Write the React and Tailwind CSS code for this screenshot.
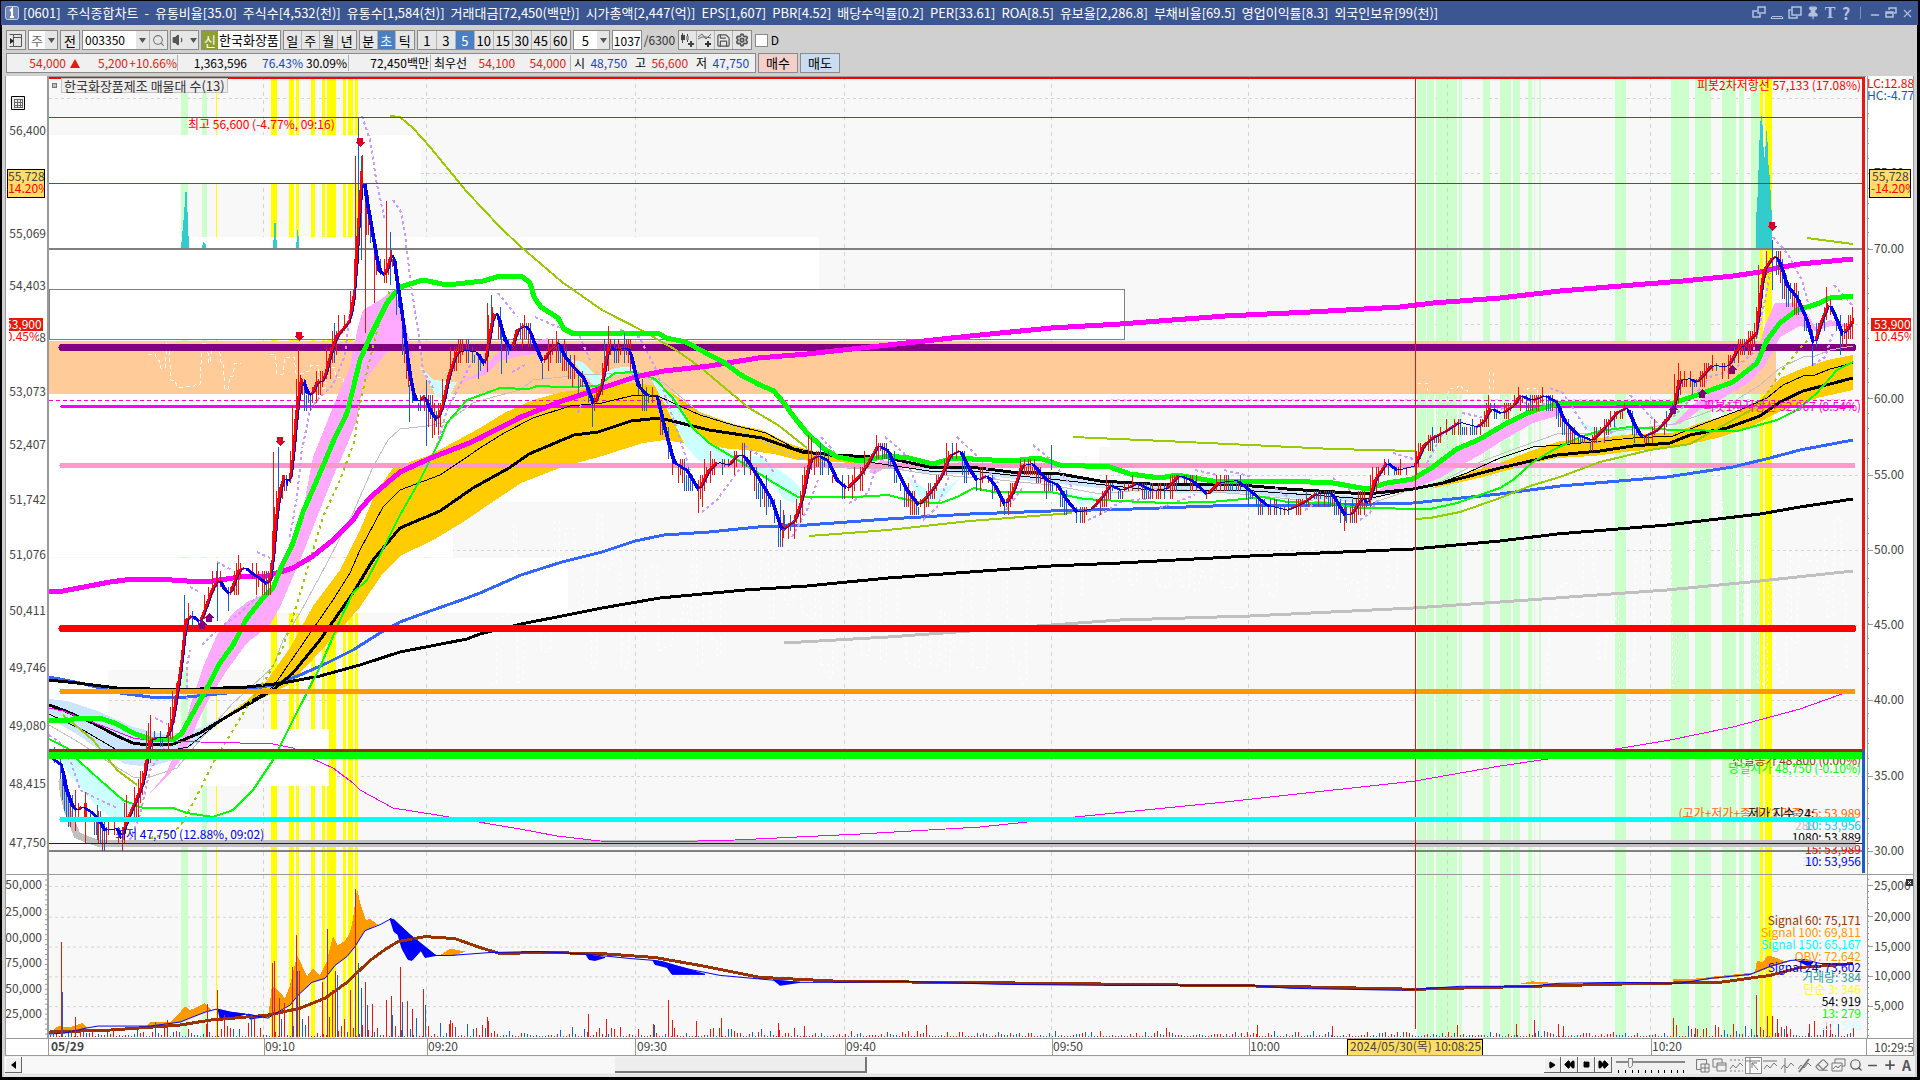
import React from "react";
import {
  Search,
  Volume1,
  Save,
  Settings,
  Pin,
  Minus,
  Plus,
  X,
  Eraser,
  Play,
  Square,
  Rewind,
  FastForward,
} from "lucide-react";

// price pane spans x 49..1866, y 76..874 ; volume pane y 874..1038
const X0 = 49;
const W = 1817;
const PRICE = { top: 76, height: 798 };
const VOLUME = { top: 874, height: 164 };

const px = (x) => `${((x - X0) / W) * 100}%`;
const py = (y, pane) => `${((y - pane.top) / pane.height) * 100}%`;

// small repeatable random so every render draws the same candles
const rnd = (n) => {
  const v = Math.sin(n * 12.9898 + 4.137) * 43758.5453;
  return v - Math.floor(v);
};

const parse = (s) => s.split(" ").map((p) => p.split(",").map(Number));

const valueAt = (pts, x) => {
  if (x <= pts[0][0]) return pts[0][1];
  for (let i = 1; i < pts.length; i++) {
    if (x <= pts[i][0]) {
      const [ax, ay] = pts[i - 1];
      const [bx, by] = pts[i];
      return ay + ((by - ay) * (x - ax)) / (bx - ax);
    }
  }
  return pts[pts.length - 1][1];
};

const greenBars = [
  [181, 7], [202, 5], [1417, 9], [1427, 7], [1436, 21], [1459, 3], [1483, 7],
  [1500, 11], [1513, 7], [1528, 4], [1534, 1], [1539, 2], [1615, 11],
  [1671, 18], [1695, 16], [1722, 14], [1739, 5], [1751, 9],
];
const yellowBars = [
  [216, 1], [271, 6], [289, 5], [296, 3], [311, 4], [322, 3], [327, 9],
  [343, 3], [348, 5], [355, 3], [1760, 3], [1765, 7],
];
const gridX = [263, 426, 635, 844, 1051, 1248, 1447, 1650];
const priceGridY = [98, 173, 249, 324, 399, 475, 550, 625, 700, 776, 851];
const volumeGridY = [885, 916, 946, 976, 1006];

// volume profile boxes: y, height, right edge
const profile = [
  [135, 48, 421], [184, 53, 180], [237, 52, 819], [394, 53, 1110],
  [447, 55, 1099], [502, 55, 453], [558, 55, 568], [613, 57, 270],
  [670, 59, 108], [729, 57, 329], [786, 57, 189],
];

const lines = {
  magenta:
    "49,592 63,591 110,582 133,579 157,579 187,581 213,581 240,577 267,576 293,568 313,556 333,540 353,520 360,509 373,495 400,472 433,457 467,444 480,438 521,417 562,401 602,388 635,377 664,371 709,366 758,358 807,354 888,345 970,336 1051,328 1120,324 1225,316 1310,312 1400,307 1433,303 1500,298 1560,291 1633,285 1683,281 1733,276 1760,272 1777,268 1800,264 1853,259",
  green:
    "49,720 67,721 77,718 100,718 117,724 133,733 150,739 173,740 182,733 193,713 207,688 220,663 233,645 247,618 263,598 273,588 280,570 293,543 303,512 320,473 333,442 347,413 354,385 360,360 370,337 387,303 400,287 423,280 447,285 483,281 500,276 523,277 530,283 534,297 541,307 558,318 564,329 574,334 623,333 660,334 666,338 686,342 704,352 725,363 741,375 758,384 774,391 784,403 794,417 807,433 823,448 837,457 860,461 888,456 909,458 933,464 953,458 1011,461 1039,458 1060,465 1110,467 1130,474 1160,478 1177,475 1213,481 1287,481 1333,483 1367,489 1387,483 1413,479 1433,467 1457,449 1480,439 1507,423 1530,412 1557,404 1617,403 1673,403 1700,394 1733,382 1757,363 1767,340 1780,323 1797,310 1817,304 1830,298 1853,296",
  black:
    "49,705 63,710 93,723 117,736 133,743 147,745 173,744 200,733 233,713 273,690 293,673 320,640 353,593 373,560 400,528 440,511 473,488 509,468 529,454 574,435 598,432 631,421 660,418 709,430 762,438 802,452 835,455 888,458 929,467 970,467 1011,472 1060,474 1100,481 1150,484 1240,485 1287,489 1367,494 1413,489 1443,483 1500,468 1557,455 1600,451 1633,446 1670,443 1690,435 1727,428 1760,416 1780,402 1803,391 1830,384 1853,378",
  blackThin:
    "49,714 83,730 117,750 140,757 188,747 213,727 247,703 273,687 293,658 333,600 350,573 360,550 383,507 400,490 440,475 467,457 480,448 504,433 533,418 570,406 602,403 635,395 660,397 700,415 733,425 766,433 794,448 835,457 929,471 970,471 1060,480 1150,490 1240,490 1367,499 1413,489 1440,483 1467,473 1500,458 1533,447 1560,445 1633,438 1673,436 1700,425 1740,410 1767,398 1783,385 1803,376 1815,375 1830,369 1853,363",
  silverThin:
    "49,725 80,743 110,763 133,777 150,777 177,768 200,740 233,703 273,667 283,640 300,613 327,563 353,513 373,467 388,440 400,429 427,426 447,422 473,403 493,397 520,390 533,380 582,375 627,373 664,383 700,413 741,430 794,457 847,468 888,468 929,474 1000,480 1051,485 1100,494 1160,488 1240,494 1300,500 1367,505 1413,489 1440,482 1480,462 1520,447 1560,433 1600,433 1673,424 1700,415 1733,402 1760,385 1780,368 1803,357 1815,356 1830,350 1853,346",
  blue:
    "49,677 80,683 120,693 150,697 187,697 227,693 273,685 300,675 327,663 353,650 380,633 400,622 433,610 467,598 480,593 521,575 562,562 602,552 635,541 664,535 709,532 758,527 807,525 888,519 970,514 1051,511 1133,509 1213,506 1333,505 1413,503 1500,494 1560,486 1667,477 1733,467 1770,458 1800,450 1853,440",
  blackLow:
    "49,680 77,683 117,688 150,689 200,689 247,687 283,683 320,676 360,665 400,652 467,639 480,634 521,624 562,616 602,608 660,598 745,590 807,586 888,578 970,572 1051,566 1120,563 1250,556 1413,549 1500,541 1557,534 1667,525 1760,514 1800,507 1853,499",
  silver:
    "784,643 888,637 970,631 1051,625 1120,620 1250,616 1413,608 1500,602 1667,590 1760,581 1853,571",
  magentaThin:
    "49,708 63,711 100,725 133,738 153,741 200,742 240,743 273,744 293,748 313,759 333,768 353,783 360,790 393,808 443,816 520,829 557,836 600,841 661,842 735,840 860,834 980,827 1065,818 1225,802 1415,781 1500,766 1548,759 1622,748 1670,740 1733,727 1800,709 1853,690",
  greenThin:
    "49,739 67,748 80,762 100,780 123,800 143,808 173,808 187,813 213,817 233,810 253,790 273,760 293,720 320,667 340,620 353,593 367,580 380,555 400,515 420,480 440,440 447,423 467,400 500,388 529,389 537,386 562,387 598,386 615,373 635,372 655,379 672,397 692,427 709,443 741,462 774,483 798,497 855,497 888,495 917,502 941,503 957,497 974,488 994,492 1051,492 1084,499 1120,501 1167,503 1210,502 1233,500 1263,497 1287,502 1327,503 1360,508 1430,509 1457,503 1500,488 1513,480 1533,462 1553,450 1580,437 1600,431 1630,427 1673,430 1737,431 1777,420 1797,410 1817,393 1837,370 1853,362",
};

const oliveSolid = [
  "390,116 400,117 413,128 430,147 467,192 500,227 520,246 562,282 602,310 643,331 676,350 700,367 725,388 749,408 778,425 807,448",
  "809,536 888,530 970,521 1072,513",
  "1073,437 1164,441 1250,445 1333,449 1415,451",
  "1415,519 1430,518 1460,512 1500,498 1530,486 1560,477 1600,462 1650,450 1690,444 1733,420 1760,405",
  "1807,238 1853,244",
  "63,715 93,740 117,770 137,785",
];
const oliveDotted = [
  "150,838 165,835 180,827 200,790 213,763 227,740 247,707 267,677 283,647 293,617 307,570 323,517 340,480 355,440 358,413 368,367 378,327 390,290",
  "1760,405 1780,373 1800,348 1808,340",
];

// parabolic stop dots
const sar = [
  "49,735 63,745 72,765 80,790 100,800 117,808",
  "130,840 140,815 150,770 165,748",
  "155,718 167,724",
  "187,700 187,665 190,650",
  "190,587 200,592",
  "217,562 232,570",
  "257,552 270,558",
  "202,645 217,630 240,613 257,597",
  "290,537 297,497 302,447",
  "303,445 310,410 320,397 333,385 345,355 350,310 355,290",
  "362,116 370,140 377,185 385,220",
  "393,200 401,212 405,235 411,285 418,330 423,370 433,388",
  "437,445 447,410 460,385 473,360",
  "498,293 517,317",
  "535,317 558,327 580,337 590,360",
  "512,372 525,365",
  "578,413 590,380",
  "620,330 639,337 655,367 676,427 690,470",
  "702,512 717,500 741,467",
  "745,446 766,460 774,473",
  "792,537 807,510 819,477",
  "821,437 839,457",
  "849,503 868,493 876,467",
  "885,437 904,453 917,487",
  "923,520 937,507 949,477",
  "957,437 978,457 998,483",
  "1006,510 1023,487",
  "1033,445 1051,460 1072,487",
  "1088,520 1105,512 1120,502 1150,498",
  "1160,508 1195,495",
  "1195,470 1217,475",
  "1224,470 1253,477",
  "1275,488 1290,498",
  "1333,478 1350,490",
  "1305,510 1320,500",
  "1360,520 1370,513 1377,500",
  "1393,453 1413,459",
  "1427,463 1443,433 1460,420",
  "1462,413 1482,417",
  "1495,410 1530,402 1550,405",
  "1550,388 1563,393 1587,430",
  "1590,445 1605,440 1618,425",
  "1630,395 1657,423",
  "1673,417 1693,397 1710,377 1733,370 1753,353 1763,310 1770,273",
  "1773,237 1787,253 1802,280 1808,303",
  "1813,365 1825,357 1833,333",
  "1834,285 1852,305",
];

const bands = [
  { fill: "#cce5ff", d: "49,699 67,701 100,712 133,727 167,735 200,728 233,712 200,740 173,760 150,767 125,764 100,750 75,733 49,718" },
  { fill: "#ccffff", d: "49,748 67,750 80,762 100,780 123,800 140,808 130,826 110,817 90,800 70,775 60,760" },
  { fill: "#ffaaff", d: "150,793 165,775 180,743 190,707 203,667 217,635 233,613 247,602 267,593 275,585 293,540 303,510 313,457 333,407 350,367 358,327 363,310 380,300 393,290 403,313 413,357 408,358 403,350 393,345 383,357 363,383 357,420 347,445 333,477 317,517 303,553 293,577 280,607 270,625 247,643 227,670 210,697 197,723 183,757 167,777" },
  { fill: "#ccffff", d: "420,367 433,380 457,382 447,400 437,397" },
  { fill: "#ffaaff", d: "457,383 480,372 490,360 500,350 520,345 548,338 548,352 520,356 500,361 485,375" },
  { fill: "#ccffff", d: "572,360 582,362 596,375 615,368 635,366 635,371 612,376 596,388" },
  { fill: "#ffcc00", d: "225,716 245,702 267,680 290,648 313,606 340,570 360,530 375,494 393,468 430,455 480,428 504,413 533,400 562,392 594,388 631,383 651,385 672,393 700,412 733,424 762,430 790,444 819,453 860,458 870,464 835,462 798,460 774,454 745,450 709,447 664,440 643,443 602,456 562,467 521,483 500,497 460,524 433,540 400,556 383,573 360,607 340,630 313,659 290,684 273,693 250,704" },
  { fill: "#ccffff", d: "651,378 675,397 692,425 709,443 735,453 760,457 775,466 790,478 802,490 800,505 785,500 765,475 750,465 725,463 700,462 685,445 670,415" },
  { fill: "#cce5ff", d: "905,462 933,470 970,469 1060,476 1100,482 1240,487 1290,491 1367,497 1390,493 1367,503 1290,498 1240,493 1150,493 1060,484 970,474 920,473" },
  { fill: "#ccffff", d: "905,475 930,492 950,485 960,478 945,497 925,505" },
  { fill: "#ffaaff", d: "868,472 880,460 895,462 905,470 885,468 875,474" },
  { fill: "#ffaaff", d: "950,465 965,460 980,466 970,470 950,470" },
  { fill: "#ccffff", d: "1055,482 1075,495 1100,497 1100,502 1080,505" },
  { fill: "#ffaaff", d: "1375,493 1387,485 1413,481 1440,466 1460,445 1480,438 1500,429 1530,415 1560,407 1560,415 1533,423 1500,442 1480,455 1467,462 1440,478 1415,488 1387,494" },
  { fill: "#ccffff", d: "1575,420 1600,430 1620,425 1640,428 1600,440" },
  { fill: "#ffcc00", d: "1430,489 1460,475 1500,463 1533,450 1560,441 1600,438 1633,434 1673,433 1700,423 1733,413 1760,400 1780,378 1803,368 1827,360 1853,355 1853,390 1817,398 1783,410 1750,427 1717,438 1673,448 1633,451 1593,456 1557,458 1533,463 1483,477" },
  { fill: "#ffaaff", d: "1673,425 1690,407 1720,385 1740,376 1757,355 1765,325 1775,303 1797,303 1805,310 1815,327 1830,320 1845,325 1853,320 1853,327 1830,326 1815,331 1800,326 1780,337 1765,365 1750,382 1720,400 1700,410 1680,424" },
];

const price = parse(
  "49,757 60,765 63,785 70,805 75,810 80,806 90,812 97,820 103,830 115,828 120,838 125,820 133,803 142,780 148,740 155,737 165,737 170,725 175,695 180,660 184,620 190,615 198,622 203,610 210,590 217,578 222,588 228,594 237,570 243,567 250,573 258,578 265,584 270,575 273,530 278,490 283,475 287,485 291,460 295,410 300,375 305,392 310,395 315,382 322,380 330,350 335,335 340,330 348,320 353,290 358,200 361,170 364,195 370,230 377,270 383,275 388,260 391,250 395,280 401,320 407,370 413,400 418,400 423,395 428,410 435,420 441,405 447,375 455,352 463,350 475,352 483,365 487,340 492,312 496,315 503,340 510,350 515,330 523,325 528,330 533,345 541,362 548,350 557,342 562,355 570,365 582,378 592,405 600,385 607,345 613,350 622,347 628,350 636,385 645,395 655,395 662,425 672,462 685,470 697,490 707,470 715,462 727,465 735,455 742,455 755,475 770,500 780,530 793,520 800,500 808,460 816,455 826,460 835,480 845,488 858,475 868,460 876,445 886,450 895,470 905,490 917,505 930,490 940,475 948,455 958,450 967,468 975,480 985,475 993,485 1003,505 1012,490 1020,465 1030,463 1045,480 1055,484 1065,500 1075,512 1090,508 1100,497 1108,485 1120,490 1135,483 1150,490 1165,488 1177,475 1190,480 1205,494 1217,482 1235,480 1250,492 1265,505 1285,510 1300,503 1315,493 1330,493 1343,515 1350,513 1360,498 1367,503 1373,480 1385,462 1395,470 1413,465 1422,445 1430,438 1445,430 1457,422 1475,427 1483,420 1488,408 1500,413 1512,405 1518,395 1530,400 1543,395 1555,402 1562,420 1575,434 1590,440 1603,427 1615,412 1625,407 1633,425 1640,437 1655,430 1667,417 1673,405 1677,380 1687,378 1695,382 1710,365 1720,366 1727,365 1735,350 1745,342 1755,332 1758,300 1762,270 1770,258 1775,256 1780,268 1785,285 1795,297 1805,320 1812,345 1820,320 1827,303 1833,315 1841,335 1848,325 1853,318"
);

// wicks that stand well clear of the rest
const longWicks = [
  [355, 156, 300, 0], [358, 117, 200, 1], [361, 156, 260, 1], [365, 190, 333, 0],
  [374, 240, 303, 0], [386, 201, 262, 0], [390, 232, 285, 1], [426, 380, 446, 1],
  [432, 395, 438, 0], [409, 385, 422, 1], [273, 452, 560, 0], [278, 447, 500, 1],
  [292, 406, 460, 0], [298, 350, 400, 0], [217, 563, 621, 1], [62, 770, 800, 1],
  [75, 790, 831, 0], [85, 792, 843, 0], [97, 805, 840, 1], [1812, 330, 366, 1],
  [1826, 287, 320, 0], [1758, 265, 330, 0], [1772, 240, 290, 1], [780, 500, 538, 1],
  [783, 510, 538, 0], [698, 480, 513, 0], [811, 437, 470, 0], [1674, 374, 410, 0],
  [491, 295, 330, 1], [487, 303, 372, 0], [501, 325, 374, 1], [608, 326, 350, 0],
  [624, 333, 352, 1], [1051, 445, 470, 1], [1066, 490, 515, 1], [1345, 500, 521, 1],
];

const OBV = {
  base: "49,1034 65,1033 86,1028 98,1026 150,1026 180,1022 205,1012 216,1009 230,1012 245,1014 268,1018 276,1013 290,1005 298,995 312,982 325,978 335,965 347,956 355,946 365,930 380,924 391,918 400,926 412,937 425,948 436,955 450,955 490,952 540,951 590,954 630,958 655,960 690,969 720,975 775,980 800,982 840,982 905,981 1000,984 1100,985 1250,985 1290,988 1400,990 1460,986 1530,986 1558,983 1620,982 1680,983 1710,978 1750,974 1770,966 1790,960 1805,959 1820,963 1853,964",
  signal:
    "49,1032 110,1030 180,1025 210,1020 268,1015 300,1008 325,998 347,982 370,960 385,949 398,941 425,936 455,938 480,947 500,953 540,952 600,953 655,957 700,965 760,977 840,981 1051,983 1280,986 1415,989 1530,986 1650,983 1720,982 1770,975 1800,967 1830,965 1853,963",
  orange: [
    "49,1034 58,1026 70,1027 82,1023 88,1028 65,1033",
    "146,1026 150,1022 170,1022 180,1012 185,1006 190,1010 205,1003 212,1010 205,1012 180,1022 160,1026",
    "268,1018 272,985 278,990 285,998 290,985 297,955 302,965 307,976 313,968 320,975 327,960 333,935 338,945 345,940 350,932 353,918 357,888 361,905 366,920 370,918 378,924 365,930 355,946 347,956 335,965 325,978 312,982 298,995 290,1005 276,1013",
    "440,955 450,948 465,951 455,955",
    "1517,984 1532,981 1545,982 1560,983",
    "1673,983 1673,979 1700,978 1715,976 1735,974 1755,972 1757,960 1762,962 1768,955 1775,957 1783,960 1790,961 1770,967 1750,975 1710,979",
  ],
  blue: [
    "218,1009 230,1012 245,1014 235,1017 220,1018",
    "248,1014 262,1017 250,1019",
    "390,918 394,919 410,934 436,955 425,957 421,950 412,960 408,959 402,948 398,934 394,931",
    "586,954 605,957 595,960 589,959",
    "653,960 662,961 705,974 672,974 667,967 655,964",
    "774,980 800,982 780,985",
    "1795,959 1813,962 1809,966",
  ],
};

const spikes = [
  [61, 941, 0], [62, 992, 1], [75, 1017, 0], [217, 990, 0], [207, 1004, 0],
  [272, 963, 0], [274, 961, 0], [279, 998, 0], [292, 967, 0], [296, 934, 0],
  [297, 971, 1], [299, 971, 0], [322, 982, 0], [327, 928, 0], [332, 990, 0],
  [335, 971, 0], [337, 975, 1], [350, 990, 0], [355, 888, 0], [358, 963, 1],
  [361, 988, 1], [365, 982, 0], [367, 1005, 1], [372, 1004, 0], [386, 1000, 0],
  [391, 996, 0], [400, 967, 0], [402, 1002, 1], [407, 1001, 0], [412, 1009, 0],
  [423, 989, 0], [425, 1005, 1], [450, 1020, 0], [487, 1017, 0], [588, 1014, 0],
  [606, 1019, 0], [653, 1024, 0], [654, 1025, 1], [668, 1000, 0], [672, 1020, 0],
  [696, 1021, 0], [721, 1018, 0], [778, 1023, 0], [804, 1026, 0], [926, 1025, 0],
  [1166, 1028, 0], [1257, 1025, 0], [1332, 1026, 0], [1457, 1025, 0], [1516, 1024, 0],
  [1534, 1020, 0], [1558, 1024, 0], [1563, 1026, 0], [1673, 1018, 0], [1695, 1028, 0],
  [1733, 1024, 0], [1756, 995, 0], [1767, 1016, 0], [1772, 1016, 0], [1777, 1019, 0],
  [1786, 1026, 0], [1809, 1024, 0], [1814, 1021, 0], [1830, 1024, 0],
];

const volumeScale = (x) => {
  if (x < 150) return 7;
  if (x < 270) return 24;
  if (x < 360) return 34;
  if (x < 430) return 30;
  if (x < 500) return 15;
  if (x < 660) return 9;
  if (x < 720) return 13;
  if (x < 800) return 8;
  if (x < 1670) return 5;
  return 14;
};

const Poly = ({ d, color, w = 1, dash }) => (
  <polyline points={d} fill="none" stroke={color} strokeWidth={w} strokeDasharray={dash} />
);

const Backdrop = ({ pane, rows }) => (
  <g>
    <rect x={X0} y={pane.top} width={W} height={pane.height} fill="#f8f8f8" />
    {rows.map((y) => (
      <line key={y} x1={X0} x2={1862} y1={y + 0.5} y2={y + 0.5} stroke="#d4d4d4" strokeDasharray="3 3" />
    ))}
    {greenBars.map(([x, w]) => (
      <rect key={x} x={x} y={pane.top} width={w} height={pane.height} fill="#ccffcc" />
    ))}
    {yellowBars.map(([x, w]) => (
      <rect key={x} x={x} y={pane.top} width={w} height={pane.height} fill="#ffff00" />
    ))}
    {gridX.map((x) => (
      <line key={x} x1={x + 0.5} x2={x + 0.5} y1={pane.top} y2={pane.top + pane.height} stroke="#d4d4d4" strokeDasharray="4 4" />
    ))}
  </g>
);

// prices move in ticks of 8px
const tick = (y) => Math.round(y / 8) * 8 + 3;

const Candles = () => {
  const bodies = [];
  const wicks = [];
  const slow = [];
  for (let x = 50; x <= 1853; x += 1) {
    const now = valueAt(price, x);
    const before = (valueAt(price, x - 2) + valueAt(price, x - 5)) / 2;
    slow.push(`${x},${before.toFixed(0)}`);
    if (Math.abs(now - before) > 1) {
      bodies.push(
        <rect key={x} x={x} y={Math.min(now, before)} width="1" height={Math.abs(now - before) + 1} fill={now < before ? "#ff0000" : "#0000ff"} />
      );
    }
    if (x % 2 === 0 && rnd(x) > 0.35) {
      const steep = Math.min(14, Math.abs(now - before));
      const reach = x < 870 || x > 1750 ? 12 : 7;
      const top = tick(now - rnd(x + 1) * (reach + steep) - 2);
      const bottom = Math.max(top + 8, tick(now + rnd(x + 2) * (reach + steep) + 2));
      const rising = now < before ? rnd(x + 3) > 0.15 : rnd(x + 3) > 0.6;
      wicks.push(
        <rect key={x} x={x} y={top} width="1" height={bottom - top} fill={rising ? "#e6190a" : "#1a5fc8"} />
      );
    }
  }
  return (
    <g>
      {wicks}
      {longWicks.map(([x, a, b, c]) => (
        <rect key={x} x={x} y={a} width="1" height={b - a} fill={c ? "#1a5fc8" : "#e6190a"} />
      ))}
      {bodies}
      <Poly d={slow.join(" ")} color="#0000cc" />
    </g>
  );
};

const noise = (from, to, top, bottom, seed) => {
  const pts = [];
  let x = from;
  let i = seed;
  while (x < to) {
    const y = top + rnd(i) * (bottom - top);
    const w = 1 + rnd(i + 7) * 8;
    pts.push(`${x.toFixed(0)},${y.toFixed(0)}`, `${(x + w).toFixed(0)},${y.toFixed(0)}`);
    x += w + 2;
    i += 1;
  }
  return pts.join(" ");
};

const Arrow = ({ x, y, up }) => (
  <path
    d={up ? `M${x} ${y - 5}l5 5h-2v4h-6v-4h-2z` : `M${x} ${y + 5}l5-5h-2v-4h-6v4h-2z`}
    fill={up ? "#800080" : "#dd0022"}
  />
);

const PricePlot = () => (
  <svg viewBox="49 76 1817 798" preserveAspectRatio="none" shapeRendering="crispEdges" className="absolute inset-0 h-full w-full">
    <Backdrop pane={PRICE} rows={priceGridY} />
    {profile.map(([y, h, right]) => (
      <rect key={y} x={X0} y={y} width={right - X0} height={h} fill="#ffffff" />
    ))}
    <rect x="49" y="289" width="1075" height="50" fill="#ffffff" stroke="#808080" />
    <rect x="49" y="341" width="1727" height="53" fill="#ffcc99" />
    <rect x="49" y="248" width="1813" height="2" fill="#808080" />
    <Poly d={noise(148, 240, 340, 395, 3)} color="#ffffff" dash="4 3" />
    <Poly d={noise(270, 350, 340, 395, 23)} color="#ffffff" dash="4 3" />
    <Poly d={noise(490, 1070, 505, 690, 40)} color="#ffffff" dash="3 4" />
    <Poly d={noise(1080, 1410, 500, 600, 90)} color="#ffffff" dash="3 4" />
    <Poly d={noise(1418, 1550, 370, 480, 190)} color="#ffffff" dash="3 4" />
    <Poly d={noise(1540, 1850, 500, 690, 140)} color="#ffffff" dash="3 4" />

    {/* volume peaks */}
    <g fill="#33cccc">
      <polygon points="181,248 184,215 186,184 187,200 189,248" />
      <polygon points="202,248 203,242 206,244 206,248" />
      <polygon points="273,248 275,215 277,248" />
      <polygon points="296,248 298,224 299,248" />
      <polygon points="1756,248 1756,220 1758,190 1759,150 1761,111 1763,130 1764,163 1766,140 1767,122 1768,160 1770,180 1772,220 1772,248" />
    </g>

    {bands.map((b, i) => (
      <polygon key={i} points={b.d} fill={b.fill} />
    ))}

    {/* level lines */}
    <line x1="49" x2="1862" y1="400.5" y2="400.5" stroke="#ff00cc" strokeDasharray="4 3" />
    <g strokeLinecap="round">
      <line x1="62" x2="1853" y1="347.5" y2="347.5" stroke="#800080" strokeWidth="7" />
      <line x1="62" x2="1853" y1="406.5" y2="406.5" stroke="#ff00ff" strokeWidth="3" />
      <line x1="62" x2="1853" y1="465.5" y2="465.5" stroke="#ff99cc" strokeWidth="5" />
      <polyline points="62,782 64,797 68,812 73,825 77,835 88,840 99,843.5 1853,843.5" fill="none" stroke="#c0c0c0" strokeWidth="7" />
    </g>
    <Poly d={lines.silverThin} color="#c0c0c0" />
    <Poly d={lines.silver} color="#c0c0c0" w={3} />
    <Poly d={lines.blue} color="#3366ff" w={3} />
    <Poly d={lines.blackLow} color="#000000" w={3} />
    <Poly d={lines.blackThin} color="#000000" />
    <Poly d={lines.black} color="#000000" w={3} />
    {oliveSolid.map((d) => (
      <Poly key={d} d={d} color="#99cc00" w={2} />
    ))}
    {oliveDotted.map((d) => (
      <Poly key={d} d={d} color="#99cc00" w={2} dash="3 4" />
    ))}
    {sar.map((d) => (
      <Poly key={d} d={d} color="#cc99ff" w={2} dash="3 3" />
    ))}
    <Poly d={lines.magentaThin} color="#ff00ff" />
    <Poly d={lines.greenThin} color="#00ff00" w={2} />
    <Poly d={lines.magenta} color="#ff00ff" w={5} />
    <Poly d={lines.green} color="#00ff00" w={5} />
    <g strokeLinecap="round">
      <line x1="62" x2="1853" y1="628.5" y2="628.5" stroke="#ff0000" strokeWidth="7" />
      <line x1="62" x2="1853" y1="691.5" y2="691.5" stroke="#ff9900" strokeWidth="5" />
    </g>
    <rect x="49" y="850" width="1813" height="2" fill="#808080" />
    <Candles />
    <rect x="49" y="843" width="1813" height="1" fill="#0000ff" />

    <Arrow x={360} y={142} />
    <Arrow x={299} y={336} />
    <Arrow x={280} y={441} />
    <Arrow x={1772} y={226} />
    <Arrow x={202} y={625} up />
    <Arrow x={209} y={618} up />
    <Arrow x={1673} y={410} up />
    <Arrow x={1702} y={394} up />
    <Arrow x={1732} y={370} up />

    {/* crosshair, high line and frame */}
    <rect x="49" y="117" width="1813" height="1" fill="#ee1111" />
    <rect x="49" y="183" width="1813" height="1" fill="#ee1111" />
    <rect x="1415" y="76" width="1" height="798" fill="#ee1111" />
    <rect x="49" y="76" width="1817" height="1" fill="#9a9a9a" />
    <rect x="49" y="77" width="1816" height="2" fill="#ff0000" />
    <rect x="1862" y="77" width="3" height="672" fill="#e6190a" />
    <rect x="1862" y="749" width="3" height="124" fill="#1a5fc8" />
  </svg>
);

// these levels are drawn above the right-hand captions
const TopLevels = () => (
  <svg viewBox="49 76 1817 798" preserveAspectRatio="none" shapeRendering="crispEdges" className="absolute inset-0 h-full w-full">
    <rect x="49" y="749" width="1813" height="3" fill="#993300" />
    <rect x="49" y="752" width="1813" height="7" fill="#00ff00" />
    <line x1="62" x2="1853" y1="819.5" y2="819.5" stroke="#00ffff" strokeWidth="5" strokeLinecap="round" />
    <rect x="1700" y="840" width="155" height="7" fill="#c0c0c0" />
    <rect x="1700" y="843" width="162" height="1" fill="#0000ff" />
  </svg>
);

const VolumePlot = () => {
  const bars = [];
  for (let x = 50; x <= 1853; x += 3) {
    const h = 1 + Math.pow(rnd(x * 3), 3) * volumeScale(x);
    bars.push(<rect key={x} x={x} y={1037 - h} width="1" height={h} fill={rnd(x + 9) > 0.5 ? "#e6190a" : "#1a5fc8"} />);
  }
  return (
    <svg viewBox="49 874 1817 164" preserveAspectRatio="none" shapeRendering="crispEdges" className="absolute inset-0 h-full w-full">
      <Backdrop pane={VOLUME} rows={volumeGridY} />
      {OBV.orange.map((d) => (
        <polygon key={d} points={d} fill="#ff9900" />
      ))}
      {OBV.blue.map((d) => (
        <polygon key={d} points={d} fill="#0000ff" stroke="#0000ff" />
      ))}
      <Poly d={OBV.signal} color="#993300" w={3} />
      <Poly d={OBV.base} color="#0000ff" />
      {bars}
      {spikes.map(([x, y, c]) => (
        <rect key={x + "-" + y} x={x} y={y} width="1" height={1037 - y} fill={c ? "#1a5fc8" : "#e6190a"} />
      ))}
      <rect x="1415" y="874" width="1" height="155" fill="#ee1111" />
    </svg>
  );
};

const Captions = ({ pane, items }) => (
  <svg className="absolute inset-0 h-full w-full text-xs">
    {items.map(([text, y, color, x], i) => (
      <text key={i} x={x ? px(x) : px(1861)} y={py(y, pane)} dy="4" textAnchor={x ? "start" : "end"} fill={color}>
        {text}
      </text>
    ))}
  </svg>
);

const priceCaptions = [
  ["최고 56,600 (-4.77%, 09:16)", 125, "#ff0000", 188],
  ["최저 47,750 (12.88%, 09:02)", 835, "#0000dd", 115],
  ["피봇2차저항선 57,133 (17.08%)", 86, "#ff0000"],
  ["피봇1차저항선 52,967 (8.54%)", 407, "#ff00cc"],
  ["전일종가 48,800 (0.00%)", 761, "#993300"],
  ["당일시가 48,750 (-0.10%)", 769, "#00ff00"],
  ["(고가+저가+종가)/3 가중 25: 53,989", 814, "#ff6600"],
  ["저가 지수 24:", 814, "#000000", 1748],
  ["288", 826, "#c0c0c0", 1795],
  ["10: 53,956", 826, "#00ccff"],
  ["1080: 53,889", 838, "#000000"],
  ["15: 53,989", 850, "#ff0000"],
  ["30", 862, "#cce5ff", 1802],
  ["10: 53,956", 862, "#0000ff"],
];

const volumeCaptions = [
  ["Signal 60: 75,171", 920, "#993300"],
  ["Signal 100: 69,811", 932, "#ff9900"],
  ["Signal 150: 65,167", 944, "#00ffff"],
  ["OBV: 72,642", 956, "#ff9900"],
  ["Signal 24: 73,602", 968, "#0000ff"],
  ["거래량: 384", 978, "#339999"],
  ["단순 3: 346", 990, "#ffff00"],
  ["54: 919", 1002, "#000000"],
  ["13: 279", 1014, "#00ff00"],
  ["27: 598", 1026, "#ccffff"],
];

const leftPrices = [
  ["56,400", 131], ["55,069", 234], ["54,403", 286], ["53,738", 338],
  ["53,073", 392], ["52,407", 445], ["51,742", 500], ["51,076", 555],
  ["50,411", 611], ["49,746", 668], ["49,080", 726], ["48,415", 784], ["47,750", 843],
];
const leftVolumes = [
  ["150,000", 884], ["125,000", 911], ["100,000", 937], ["75,000", 963], ["50,000", 989], ["25,000", 1014],
];
const rightPrices = [
  ["75.00", 173], ["70.00", 249], ["60.00", 399], ["55.00", 475], ["50.00", 550],
  ["45.00", 625], ["40.00", 700], ["35.00", 776], ["30.00", 851],
];
const rightVolumes = [
  ["25,000", 885], ["20,000", 916], ["15,000", 946], ["10,000", 976], ["5,000", 1006],
];

const PriceTags = ({ left, pane }) => {
  const x = left ? 1 : 3;
  const w = left ? 38 : 42;
  return (
    <g>
      <svg x={x} y={py(169, pane)} width={w} height="29">
        <rect width="100%" height="100%" fill="#ffdd66" stroke="#000000" strokeWidth="2" />
        <text x={left ? 1 : 3} y="12" fill="#444444">55,728</text>
        <text x={left ? -3 : 2} y="24" fill="#ff0000">-14.20%</text>
      </svg>
      <svg x={left ? 3 : 5} y={py(318, pane)} width={left ? 34 : 40} height="13">
        <rect width="100%" height="100%" fill="#e6190a" />
        <text x={left ? -4 : 3} y="11" fill="#ffffff">53,900</text>
      </svg>
      <svg x={left ? 3 : 5} y={py(331, pane)} width={left ? 29 : 40} height="13">
        <rect width="100%" height="100%" fill="#ffffff" />
        <text x={left ? -10 : 3} y="10" fill="#ff0000">10.45%</text>
      </svg>
    </g>
  );
};

const LeftAxis = ({ pane, labels, right, children }) => (
  <svg className="h-full w-full bg-white text-xs" fill="#444444">
    {labels.map(([t, y]) => (
      <text key={t + y} x={right} y={py(y, pane)} dy="4" textAnchor="end">{t}</text>
    ))}
    {children}
    <line x1="42" x2="42" y1="0" y2="100%" stroke="#9a9a9a" strokeWidth="2" />
  </svg>
);

const RightAxis = ({ pane, labels, minor, children }) => (
  <svg className="h-full w-full bg-white text-xs" fill="#444444" shapeRendering="crispEdges">
    <line x1="1" x2="1" y1="0" y2="100%" stroke="#9a9a9a" strokeWidth="1" />
    {minor.map((y) => (
      <line key={y} x1="1" x2="3" y1={py(y, pane)} y2={py(y, pane)} stroke="#9a9a9a" />
    ))}
    {labels.map(([t, y]) => (
      <g key={t}>
        <line x1="1" x2="7" y1={py(y, pane)} y2={py(y, pane)} stroke="#9a9a9a" />
        <text x="8" y={py(y, pane)} dy="4">{t}</text>
      </g>
    ))}
    {children}
  </svg>
);

const range = (from, to, step) => {
  const out = [];
  for (let v = from; v < to; v += step) out.push(v);
  return out;
};

const timeTicks = [
  ["09:10", 263], ["09:20", 426], ["09:30", 635], ["09:40", 844],
  ["09:50", 1051], ["10:00", 1248], ["10:20", 1650],
];

const TimeAxis = () => (
  <svg className="h-full w-full bg-white text-xs" fill="#444444" shapeRendering="crispEdges">
    <text x="2" y="12" fontWeight="700">05/29</text>
    {timeTicks.map(([t, x]) => (
      <svg key={t} x={px(x)} width="50" height="18">
        <line x1="1" x2="1" y1="0" y2="18" stroke="#9a9a9a" />
        <text x="2" y="12">{t}</text>
      </svg>
    ))}
    <svg x={px(1347)} width="136" height="17">
      <rect width="100%" height="100%" fill="#ffdd66" stroke="#000000" strokeWidth="2" />
      <text x="3" y="12">2024/05/30(목) 10:08:25</text>
    </svg>
  </svg>
);

const Caret = () => (
  <svg width="7" height="5" viewBox="0 0 7 5" fill="#555555">
    <path d="M0 0h7L3.500 5z" />
  </svg>
);

const box = "h-5 border border-[#8a8a8a] flex items-center justify-center";
const groupCls = "flex h-5 border border-[#8a8a8a] divide-x divide-[#b4b4b4] bg-[#e6e6e6]";

const ButtonGroup = ({ items, active, wide }) => (
  <div className={groupCls}>
    {items.map((t) => (
      <button key={t} type="button" className={(wide ? "w-[19px]" : "w-[18px]") + (t === active ? " bg-[#4a7fc4] text-white" : "")}>
        {t}
      </button>
    ))}
  </div>
);

const titleParts = [
  "[0601]", "주식종합차트", "-", "유통비율[35.0]", "주식수[4,532(천)]", "유통수[1,584(천)]",
  "거래대금[72,450(백만)]", "시가총액[2,447(억)]", "EPS[1,607]", "PBR[4.52]",
  "배당수익률[0.2]", "PER[33.61]", "ROA[8.5]", "유보율[2,286.8]", "부채비율[69.5]",
  "영업이익률[8.3]", "외국인보유[99(천)]",
];

const TitleBar = () => (
  <header className="flex h-6 items-center bg-[#3b5691] pl-1 pr-1 text-white">
    <svg width="14" height="16" viewBox="0 0 14 16" fill="none" stroke="#c5d0e6">
      <rect x="0.500" y="1.500" width="13" height="13" rx="2" fill="#6f86b6" />
      <path d="M5 6l2-2v8M5 12h4" stroke="#ffffff" strokeWidth="2" />
    </svg>
    <h1 className="ml-1 flex flex-1 gap-[6px] whitespace-nowrap leading-5">
      {titleParts.map((t) => (
        <span key={t}>{t}</span>
      ))}
    </h1>
    <div className="flex items-center gap-1 text-[#b4c2de]">
      <svg width="14" height="14" viewBox="0 0 14 14" fill="none" stroke="currentColor" strokeWidth="1.500">
        <path d="M6 1h7v6H6zM5 5H1v6h7V8" />
      </svg>
      <svg width="14" height="14" viewBox="0 0 14 14" fill="none" stroke="currentColor">
        <path d="M2 10.500h10l1 2H1z" />
      </svg>
      <svg width="14" height="14" viewBox="0 0 14 14" fill="none" stroke="currentColor" strokeWidth="1.500">
        <path d="M4 1h9v8H4zM3 4H1v8h8v-2" />
      </svg>
      <Pin size={14} fill="currentColor" />
      <span className="w-3 text-center font-['Liberation_Serif',serif] text-base font-bold leading-5">T</span>
      <span className="w-3 text-center text-base font-bold leading-5">?</span>
      <span className="mx-1 h-3 w-px bg-[#7d91bd]" />
      <Minus size={12} strokeWidth={3} className="mt-1" />
      <svg width="12" height="12" viewBox="0 0 12 12" fill="none" stroke="currentColor" strokeWidth="1.500">
        <path d="M4 3V1h7v5H9M1 5h7v5H1zM1 6h7" />
      </svg>
      <X size={13} />
    </div>
  </header>
);

const Toolbar = () => (
  <div className="flex items-center gap-[2px] pl-[2px]">
    <button type="button" aria-label="목록" className={box + " w-5 bg-[#e6e6e6]"}>
      <svg width="14" height="13" viewBox="0 0 14 13" fill="none" stroke="#555555">
        <path d="M4.500 0.500h8v12h-8zM4.500 3.500h8M0.500 0.500h4M0.500 12.500h4" />
        <path d="M1 4l4 3-4 3z" fill="#222222" stroke="none" />
      </svg>
    </button>
    <div className="flex h-5 w-[30px] border border-[#8a8a8a] bg-white">
      <select aria-label="구분" className="w-4 appearance-none pl-[2px] text-[#666666]">
        <option>주</option>
      </select>
      <span className="flex w-3 items-center justify-center bg-[#e6e6e6]"><Caret /></span>
    </div>
    <button type="button" className={box + " w-5 bg-[#e6e6e6]"}>전</button>
    <div className="flex h-5 w-[86px] border border-[#8a8a8a] bg-white">
      <input aria-label="종목코드" defaultValue="003350" className="w-[53px] pl-[2px] text-xs" />
      <span className="flex w-[13px] items-center justify-center bg-[#e6e6e6]"><Caret /></span>
      <button type="button" aria-label="검색" className="flex w-[18px] items-center justify-center border-l border-[#b4b4b4] bg-[#e6e6e6] text-[#777777]">
        <Search size={13} />
      </button>
    </div>
    <button type="button" aria-label="소리" className="flex h-5 w-[29px] items-center justify-center gap-1 border border-[#8a8a8a] bg-[#e6e6e6] text-[#555555]">
      <Volume1 size={14} fill="currentColor" />
      <Caret />
    </button>
    <div className="flex h-5 items-center border border-[#8a8a8a] bg-white">
      <span className="flex h-full w-4 items-center justify-center bg-[#8e9f32] text-white">신</span>
      <span className="whitespace-nowrap px-px leading-4">한국화장품</span>
    </div>
    <ButtonGroup items={["일", "주", "월", "년"]} />
    <ButtonGroup items={["분", "초", "틱"]} active="초" />
    <ButtonGroup items={["1", "3", "5", "10", "15", "30", "45", "60"]} active="5" wide />
    <div className="flex h-5 w-[37px] border border-[#8a8a8a] bg-white">
      <select aria-label="주기" className="w-6 appearance-none pl-2">
        <option>5</option>
      </select>
      <span className="flex w-3 items-center justify-center bg-[#e6e6e6]"><Caret /></span>
    </div>
    <input aria-label="봉 개수" defaultValue="1037" className="h-5 w-[30px] border border-[#8a8a8a] bg-white pl-px text-xs" />
    <span className="w-8 text-xs text-[#333333]">/6300</span>
    <div className={groupCls + " text-[#555555]"}>
      <button type="button" aria-label="봉" className="flex w-[18px] items-center justify-center">
        <svg width="16" height="16" viewBox="0 0 16 16" fill="none" stroke="#444444">
          <path d="M3.500 1v10M8.500 2v8" />
          <path d="M2 3h4v5H2z" fill="#444444" stroke="none" />
          <path d="M7 4h3v4H7z" fill="#999999" stroke="none" />
          <path d="M12 9v6M9 12h6" strokeWidth="2" />
        </svg>
      </button>
      <button type="button" aria-label="지표" className="flex w-[18px] items-center justify-center">
        <svg width="16" height="16" viewBox="0 0 16 16" fill="none" stroke="#666666">
          <path d="M1 5l4-3 4 5 5-5M1 7l4-2 4 0 5 1" />
          <path d="M11 9v6M8 12h6" stroke="#333333" strokeWidth="2" />
        </svg>
      </button>
      <button type="button" aria-label="저장" className="flex w-[18px] items-center justify-center"><Save size={15} /></button>
      <button type="button" aria-label="설정" className="flex w-[18px] items-center justify-center"><Settings size={14} strokeWidth={3} /></button>
    </div>
    <label className="ml-px flex items-center gap-[3px] text-xs">
      <input type="checkbox" className="h-[13px] w-[13px] appearance-none border border-[#8a8a8a] bg-white" />D
    </label>
  </div>
);

const red = "text-[#e6190a]";
const blue = "text-[#1446c0]";

const Quote = () => (
  <div className="flex items-center gap-[2px] pl-[2px] text-xs">
    <div className="flex h-5 items-center divide-x divide-[#b4b4b4] whitespace-nowrap border border-[#8a8a8a] bg-[#f0f0f0] text-right leading-4">
      <div className="flex w-[171px] items-center">
        <span className={"w-[59px] " + red}>54,000</span>
        <svg width="10" height="9" viewBox="0 0 10 9" className="ml-1" fill="#e6190a"><path d="M5 0l5 9H0z" /></svg>
        <span className={"w-[48px] " + red}>5,200</span>
        <span className={"w-[49px] " + red}>+10.66%</span>
      </div>
      <div className="flex w-[171px]">
        <span className="w-[69px]">1,363,596</span>
        <span className={"w-[56px] " + blue}>76.43%</span>
        <span className="w-[44px]">30.09%</span>
      </div>
      <div className="w-[82px] pr-px">72,450백만</div>
      <div className="flex w-[140px] pl-[3px]">
        <span>최우선</span>
        <span className={"w-[48px] " + red}>54,100</span>
        <span className={"w-[51px] " + red}>54,000</span>
      </div>
      <div className="flex w-[184px] gap-1 pl-[3px]">
        <span>시</span><span className={"w-[38px] " + blue}>48,750</span>
        <span className="pl-1">고</span><span className={"w-[38px] " + red}>56,600</span>
        <span className="pl-1">저</span><span className={"w-[38px] " + blue}>47,750</span>
      </div>
    </div>
    <button type="button" className={box + " w-10 bg-[#f5cfca] text-[13px]"}>매수</button>
    <button type="button" className={box + " w-10 bg-[#c8dcf2] text-[13px]"}>매도</button>
  </div>
);

const raised = "flex h-4 w-[17px] items-center justify-center border-b border-r border-[#666666] bg-[#f0f0f0] shadow-[inset_1px_1px_0_#ffffff]";

const wave = "M1 11l3-4 3 3 4-5 3 3";

const ToolIcon = ({ children, label, pressed }) => (
  <button type="button" aria-label={label} className={pressed ? "flex w-[17px] justify-center border border-[#8a8a8a] bg-white" : "flex w-[17px] justify-center"}>
    <svg width="15" height="15" viewBox="0 0 15 15" fill="none" stroke="#777777">
      {children}
    </svg>
  </button>
);

const BottomBar = () => (
  <footer className="flex h-[18px] items-center bg-[#f0f0f0] pl-[1px]">
    <button type="button" aria-label="왼쪽" className={raised}>
      <svg width="5" height="8" viewBox="0 0 5 8"><path d="M5 0v8L0 4z" /></svg>
    </button>
    <div className="flex h-4 flex-1 bg-[#f8f8f8]">
      <div className="grow-[594]" />
      <div className="h-4 grow-[250] border-b-2 border-r-2 border-[#777777] bg-[#eeeeee]" />
      <div className="grow-[678]" />
    </div>
    <div className="flex">
      <button type="button" aria-label="재생" className={raised}><Play size={8} fill="black" /></button>
      <button type="button" aria-label="뒤로" className={raised}><Rewind size={11} fill="black" /></button>
      <button type="button" aria-label="정지" className={raised}><Square size={7} fill="black" /></button>
      <button type="button" aria-label="앞으로" className={raised}><FastForward size={11} fill="black" /></button>
    </div>
    <svg width="70" height="16" viewBox="0 0 70 16" shapeRendering="crispEdges" className="ml-1 mr-2">
      <path d="M0 4.500h69" stroke="#888888" strokeWidth="2" />
      <path d="M2.500 13v3M9.500 13v3M16.500 13v3M22.500 13v3M29.500 13v3M35.500 13v3M42.500 13v3M48.500 13v3M55.500 13v3M61.500 13v3M67.500 13v3" stroke="#000000" />
      <path d="M12 1h4v8l-2 2-2-2z" fill="#f0f0f0" stroke="#888888" />
    </svg>
    <div className="flex items-center">
      <ToolIcon label="추가"><path d="M1.500 1.500h10v10h-10z" /><path d="M6 6h8v8H6zM10 6v8M6 10h8" fill="#f0f0f0" /></ToolIcon>
      <ToolIcon label="겹치기"><path d="M1 1h9v8H1z" /><path d="M5 5h9v8H5zM5 7h9" fill="#f0f0f0" /></ToolIcon>
      <ToolIcon label="맞춤"><path d={wave} /><path d="M1 2h13M1 13h13" strokeDasharray="2 2" /></ToolIcon>
      <ToolIcon label="십자선" pressed><path d="M4 0v15M0 3h14M6 5l6 7M6 5v5M6 5h5" /></ToolIcon>
      <ToolIcon label="수평선"><path d={wave} /><path d="M0 3h14" /></ToolIcon>
      <ToolIcon label="수직선"><path d={wave} /><path d="M5 0v15" /></ToolIcon>
      <ToolIcon label="추세선"><path d={wave} /><path d="M2 14L12 1" strokeWidth="2" /></ToolIcon>
      <button type="button" aria-label="지우기" className="flex w-[17px] justify-center text-[#777777]"><Eraser size={14} /></button>
      <ToolIcon label="차트"><path d="M4 1h10v7H4z" /><path d="M1 5h10v8H1zM2 11l3-3 2 2 3-3" fill="#f0f0f0" /></ToolIcon>
      <button type="button" aria-label="확대경" className="flex w-[17px] justify-center text-[#555555]"><Search size={14} /></button>
      <button type="button" aria-label="축소" className="flex w-[17px] justify-center text-[#555555]"><Minus size={13} strokeWidth={3} /></button>
      <button type="button" aria-label="확대" className="flex w-[17px] justify-center text-[#555555]"><Plus size={14} strokeWidth={3} /></button>
      <button type="button" className="w-[17px] text-center text-sm font-bold leading-4 text-[#555555]">A</button>
    </div>
  </footer>
);

const App = () => {
  return (
    <div className="flex h-screen flex-col bg-black pb-[3px] pl-px pr-[2px] pt-px font-['Noto_Sans_CJK_KR',sans-serif] text-[13px] leading-none text-black">
      <TitleBar />
      <div className="ml-px mr-px flex min-h-0 flex-1 flex-col bg-[#d0d0d0] pl-[2px] pr-[2px]">
        <div className="flex flex-col gap-[3px] pb-[3px] pt-[5px]">
          <Toolbar />
          <Quote />
        </div>
        <main className="ml-[1px] mr-[1px] grid min-h-0 flex-1 grid-cols-[43px_1fr_47px] grid-rows-[798fr_164fr_18px] border-x border-[#9a9a9a] bg-white">
          <LeftAxis pane={PRICE} labels={leftPrices} right={40}>
            <svg x="5" y="20" width="15" height="15">
              <path d="M0.500 0.500h13v13h-13z" fill="#eeeeee" stroke="#000000" />
              <path d="M3 3.500h9M3 6.500h9M3 9.500h9M3 11.500h9M3.500 3v9M6.500 3v9M9.500 3v9M11.500 3v9" stroke="#666666" />
            </svg>
            <PriceTags left pane={PRICE} />
          </LeftAxis>
          <section className="relative min-h-0 min-w-0">
            <PricePlot />
            <Captions pane={PRICE} items={priceCaptions} />
            <TopLevels />
            <div className="absolute left-[3px] top-[2px] flex items-center gap-1">
              <span className="h-[5px] w-[5px] border border-[#777777] bg-[#c0c0c0]" />
              <span className="border border-[#c4c4c4] bg-[#eeeeee] px-[2px] text-[13px] leading-[13px] text-[#333333]">
                한국화장품제조 매물대 수(13)
              </span>
            </div>
          </section>
          <RightAxis pane={PRICE} labels={rightPrices} minor={range(113, 870, 15)}>
            <text x="1" y="12" fill="#ff0000">LC:12.88</text>
            <text x="1" y="24" fill="#1155cc">HC:-4.77</text>
            <PriceTags pane={PRICE} />
          </RightAxis>

          <div className="border-t border-[#9a9a9a]">
            <LeftAxis pane={VOLUME} labels={leftVolumes} right={36}>
              {range(879, 1036, 5).map((y) => (
                <line key={y} x1="39" x2="42" y1={py(y, VOLUME)} y2={py(y, VOLUME)} stroke="#9a9a9a" />
              ))}
            </LeftAxis>
          </div>
          <section className="relative min-h-0 min-w-0 border-t border-[#9a9a9a]">
            <VolumePlot />
            <Captions pane={VOLUME} items={volumeCaptions} />
          </section>
          <div className="border-t border-[#9a9a9a]">
            <RightAxis pane={VOLUME} labels={rightVolumes} minor={range(879, 1036, 6)}>
              <rect x="40" y="4" width="7" height="7" fill="#333333" />
              <path d="M42 6l3 3M45 6l-3 3" stroke="#ffffff" />
            </RightAxis>
          </div>

          <div className="border-y border-r border-[#9a9a9a]" />
          <div className="min-w-0 border-y border-[#9a9a9a]">
            <TimeAxis />
          </div>
          <div className="overflow-hidden border-y border-l border-[#9a9a9a] pl-[7px] text-xs leading-4 text-[#444444]">10:29:5</div>
        </main>
        <BottomBar />
        <div className="h-[3px] bg-[#e6e6e6]" />
      </div>
    </div>
  );
};

export default App;
